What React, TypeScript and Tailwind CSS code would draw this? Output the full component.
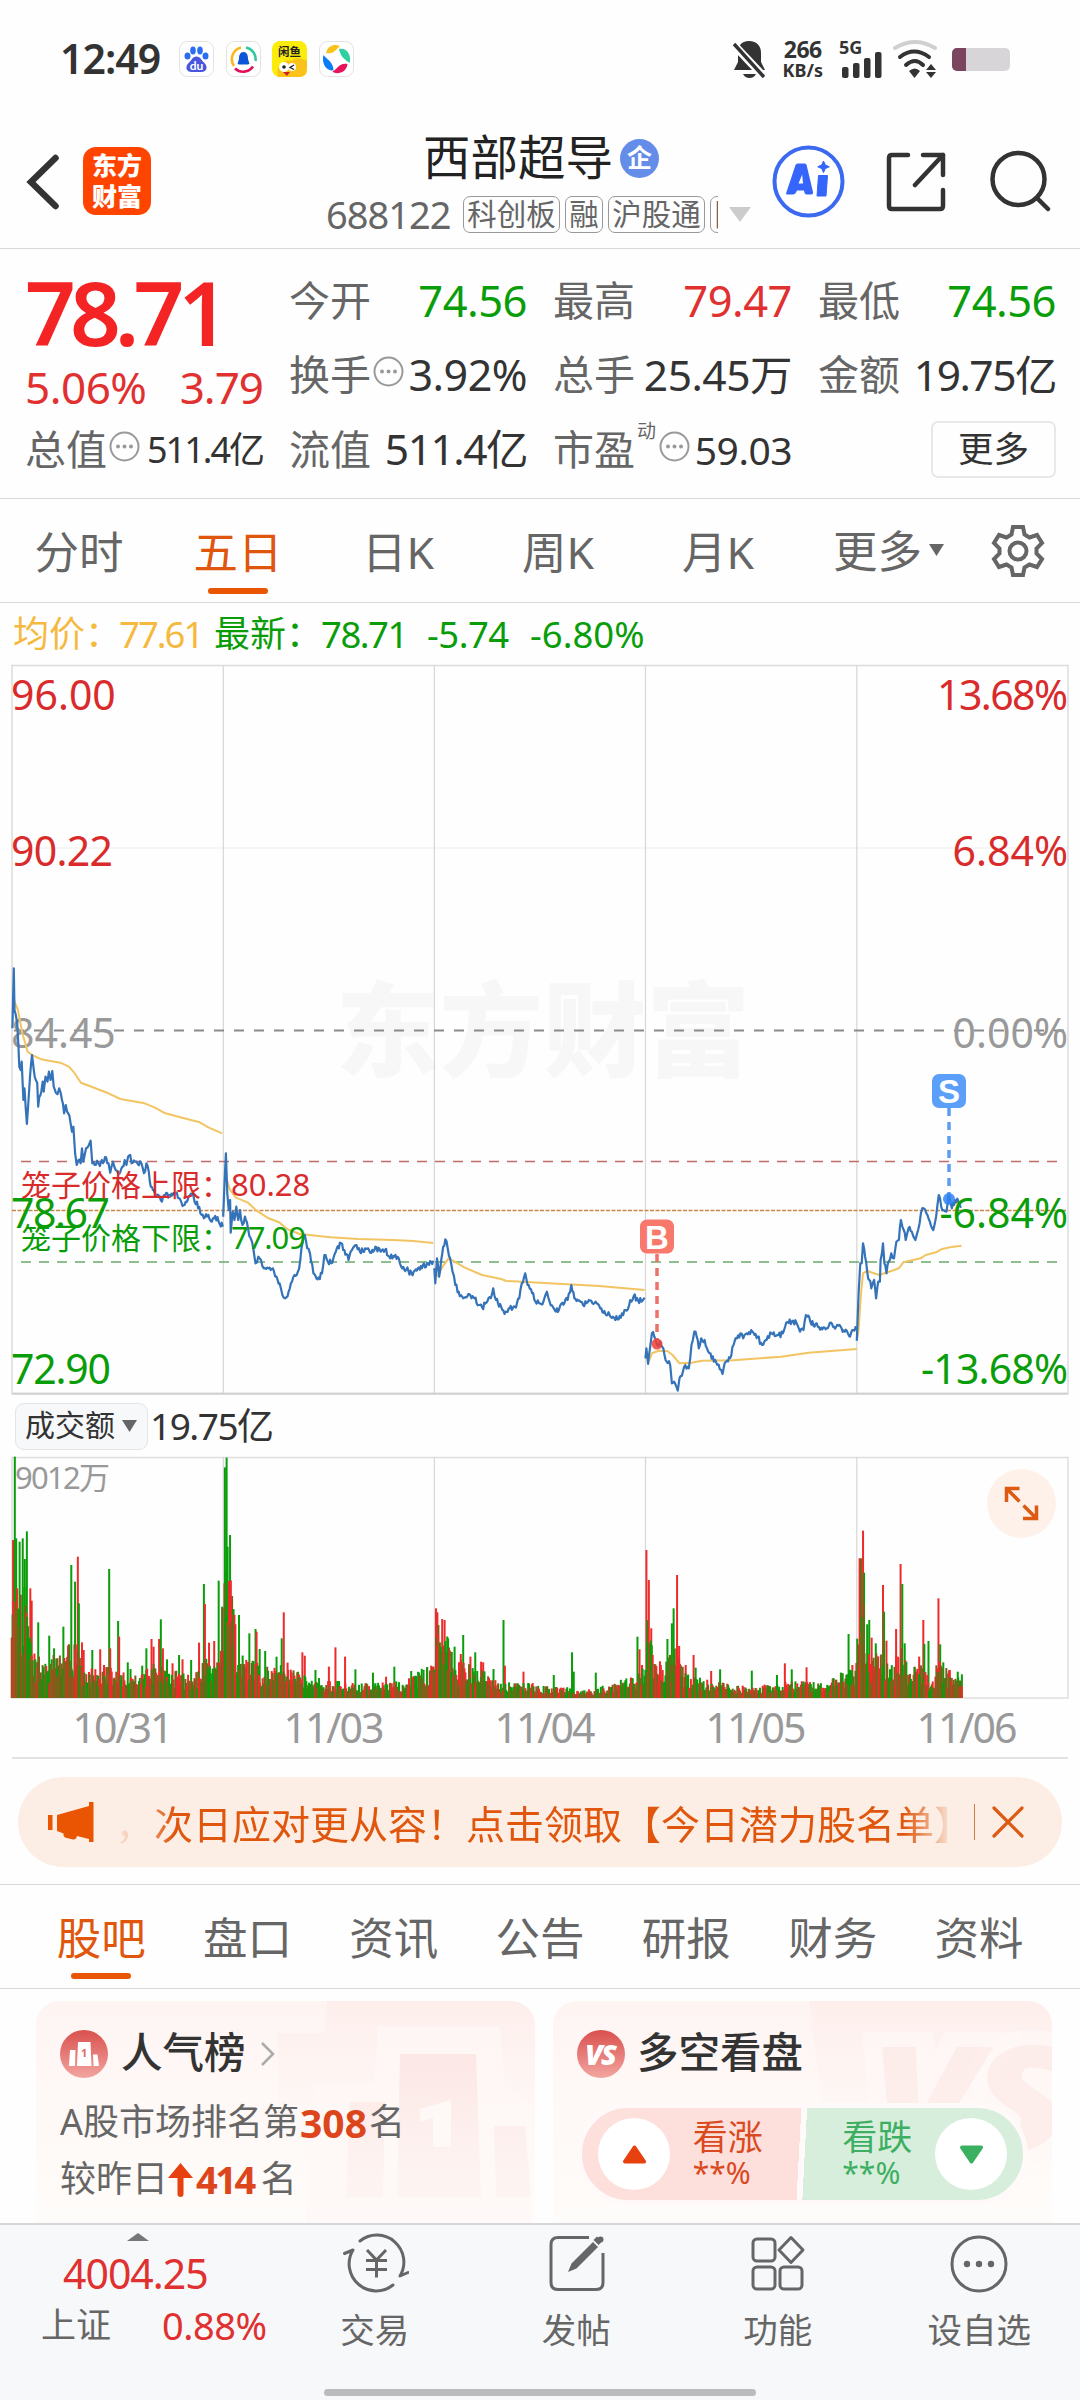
import type { ReactNode } from "react";
import clsx from "clsx";

// trims the line box so that glyphs sit in the optical middle of a row
const T = "block leading-none pb-[0.04em] whitespace-nowrap";

type Pt = [number, number];

// chart data is stored in sampling units, these map it to pixels
const SX = 0.34439;
const SY = 1 / 3;

const rand = (seed: number) => {
	let s = seed;
	return () => {
		s = (s * 1664525 + 1013904223) % 4294967296;
		return s / 4294967296;
	};
};

const parse = (s: string): Pt[] => s.trim().split(/\s+/).map((p) => p.split(",").map(Number) as Pt);

const PRICE = [
	"36,385 40,205 42,330 46,345 50,370 56,500 60,510 63,485 68,600 71,565 78,672 82,615 87,530 93,465 98,510 104,540 108,548 111,620 114,590 120,575 124,545 127,575 132,530 138,545 142,515 147,540 152,513 156,560 162,578 167,583 172,565 180,600 186,640 191,615 198,640 205,670 209,695 213,680 218,760 223,795 228,780 234,790 238,745 242,785 250,745 258,735 263,722 268,790 275,795 282,782 290,798 296,780 302,785 308,772 315,790 320,818 328,785 332,800 340,812 346,822 355,800 362,780 367,795 372,770 378,765 382,790 392,785 400,792 410,788 418,820 425,790 432,815 438,860 450,880 460,885 470,905 480,885 495,890 510,882 520,895 530,918 545,900 560,880 565,905 572,905 582,940 592,955 605,945 615,965 625,948 635,965 647,980",
	"648,950 652,850 656,760 660,880 664,930 668,900 670,998 676,935 681,960 686,920 692,960 697,930 704,975 711,950 720,985 728,1015 736,1050 742,1090 750,1070 758,1080 766,1105 780,1105 795,1112 803,1130 812,1150 820,1185 828,1195 838,1175 848,1145 855,1125 865,1115 872,1080 878,1030 885,1005 892,1045 900,1060 910,1120 922,1138 935,1120 942,1065 952,1085 965,1088 975,1055 990,1030 1000,1050 1012,1080 1022,1050 1032,1035 1045,1055 1060,1045 1075,1058 1090,1040 1105,1055 1118,1050 1130,1070 1145,1070 1158,1075 1165,1100 1180,1108 1195,1120 1210,1112 1225,1105 1240,1090 1258,1082",
	"1261,1105 1264,1150 1269,1075 1275,1130 1281,1080 1287,1040 1293,1018 1300,1045 1307,1075 1314,1115 1322,1155 1332,1175 1345,1195 1360,1182 1378,1195 1390,1215 1400,1222 1412,1208 1425,1195 1432,1165 1440,1200 1455,1220 1465,1242 1480,1225 1495,1220 1508,1195 1515,1150 1525,1120 1532,1155 1545,1180 1555,1205 1568,1210 1578,1205 1588,1175 1596,1205 1608,1225 1623,1230 1633,1208 1648,1200 1659,1155 1668,1195 1680,1202 1693,1215 1710,1200 1723,1212 1736,1212 1746,1225 1758,1242 1770,1245 1780,1250 1793,1258 1806,1240 1820,1232 1830,1200 1840,1188 1853,1202 1872,1193",
	"1874,1375 1877,1345 1882,1392 1888,1340 1893,1300 1900,1310 1908,1335 1916,1325 1926,1345 1936,1385 1946,1395 1951,1450 1960,1450 1968,1472 1973,1435 1983,1415 1990,1395 2000,1405 2008,1335 2016,1295 2023,1310 2029,1345 2036,1315 2046,1320 2053,1345 2063,1360 2073,1385 2083,1395 2090,1408 2098,1422 2108,1385 2120,1375 2130,1335 2140,1315 2150,1300 2158,1315 2168,1300 2188,1298 2200,1310 2213,1335 2226,1320 2240,1300 2253,1308 2273,1300 2283,1268 2303,1262 2313,1270 2323,1295 2333,1290 2340,1245 2353,1265 2368,1272 2388,1288 2413,1268 2428,1280 2438,1275 2453,1295 2468,1310 2478,1290 2487,1290",
	"2488,1322 2493,1180 2498,1090 2502,1090 2506,1030 2512,1070 2518,1115 2524,1140 2530,1165 2538,1140 2544,1195 2550,1145 2555,1145 2557,1080 2564,1030 2568,1090 2574,1120 2580,1085 2588,1060 2596,1075 2603,1025 2610,1020 2616,960 2624,990 2630,1020 2638,985 2648,995 2658,1020 2666,990 2674,940 2682,925 2690,940 2700,965 2710,990 2718,950 2726,885 2733,920 2740,930 2748,935 2754,880 2764,925 2773,900 2783,905 2792,920",
].map(parse);

const AVERAGE = [
	"40,300 52,330 65,400 80,455 93,465 120,478 150,484 175,488 200,500 215,517 235,548 260,558 290,570 315,580 350,597 420,610 450,623 480,640 540,656 580,667 605,682 645,700",
	"656,830 668,870 685,893 720,908 745,932 780,955 810,967 835,988 870,1002 960,1012 1040,1017 1140,1020 1200,1023 1258,1029",
	"1270,1130 1285,1100 1303,1075 1320,1085 1350,1103 1400,1125 1455,1137 1470,1143 1568,1148 1740,1158 1872,1170",
	"1884,1385 1893,1360 1913,1352 1938,1353 1953,1365 1973,1390 2008,1388 2038,1382 2128,1381 2268,1370 2348,1358 2488,1347",
	"2488,1322 2493,1290 2500,1180 2506,1120 2518,1113 2553,1125 2588,1113 2610,1105 2623,1087 2673,1075 2688,1065 2718,1057 2733,1048 2758,1042 2792,1037",
].map(parse);

const ENVELOPE = parse(
	"34,330 75,350 95,130 130,100 200,150 228,150 240,90 300,90 400,60 440,100 560,60 600,120 640,120 650,350 670,350 690,130 760,90 830,90 870,70 890,60 1060,40 1180,50 1240,90 1258,90 1264,180 1300,180 1330,110 1400,80 1430,50 1568,40 1600,35 1720,25 1800,50 1860,70 1870,110 1885,200 1900,100 1940,110 1965,150 1990,70 2060,50 2180,30 2300,50 2400,45 2440,70 2480,90 2492,250 2510,260 2530,110 2560,140 2590,90 2620,150 2640,70 2670,100 2700,60 2730,110 2750,80 2793,50"
);

const PEAKS =
	"r38,450 g43,200 g47,445 g57,455 g66,445 g72,507 g78,424 r88,595 r92,632 g111,697 g143,737 g157,775 r167,805 g184,710 g207,525 g218,575 r226,500 g229,640 r238,757 r243,780 g268,780 r291,778 r302,825 g317,537 r320,775 g343,693 r346,740 g371,817 g379,837 g413,827 g425,775 r440,747 r446,770 r462,747 g467,688 r473,775 g485,808 r501,820 g520,795 r530,808 g555,810 r578,758 g592,582 r595,642 r607,758 r622,753 g635,572 g645,650 g653,232 g658,203 g661,470 g668,435 b674,618 g682,705 g694,675 g724,730 g742,717 r745,725 g754,777 g770,783 g803,800 g818,745 r824,667 r835,818 r878,787 r885,797 g916,840 r955,830 r974,772 r1002,800 g1032,838 g1083,848 r1121,860 g1145,830 g1194,843 r1240,833 r1252,827 r1266,655 r1270,667 b1273,705 r1284,687 r1291,690 g1301,745 g1320,770 r1338,792 g1345,735 r1366,800 g1380,787 r1397,815 r1403,817 g1433,837 g1462,690 r1466,827 r1520,845 g1608,855 g1661,787 g1666,845 g1730,848 g1851,740 r1857,778 r1864,825 r1877,480 g1880,690 r1884,570 r1891,715 g1938,747 g1951,700 g1956,655 r1966,555 r1972,768 r1991,825 r2014,795 g2020,833 r2065,843 g2091,838 g2183,842 g2256,855 r2279,820 g2299,838 r2342,832 g2464,732 r2475,825 r2496,505 b2500,505 r2506,422 g2509,548 g2518,703 g2524,690 r2531,743 g2543,760 r2564,585 g2567,665 r2574,752 r2602,717 r2615,522 g2620,582 g2627,760 r2656,830 r2669,800 r2681,690 g2684,762 g2696,753 r2725,625 g2730,763 g2739,817 r2758,840 g2781,845 g2793,853";

const RED = "#ee2a2a";
const GREEN = "#0a9d0a";
const BROWN = "#79601a";

const toPath = (pts: Pt[]) => pts.map(([x, y], i) => `${i ? "L" : "M"}${(x * SX).toFixed(1)} ${(y * SY).toFixed(1)}`).join("");

const jitter = (pts: Pt[], seed: number): Pt[] => {
	const r = rand(seed);
	const out: Pt[] = [];
	pts.forEach(([x, y], i) => {
		out.push([x, y]);
		const next = pts[i + 1];
		if (!next) return;
		const n = Math.floor((next[0] - x) / 3);
		for (let k = 1; k < n; k++) {
			const t = k / n;
			out.push([x + (next[0] - x) * t, y + (next[1] - y) * t + (r() - 0.5) * 18]);
		}
	});
	return out;
};

const envelopeAt = (x: number) => {
	const i = ENVELOPE.findIndex((p) => p[0] >= x);
	if (i <= 0) return ENVELOPE[0][1];
	const [x0, y0] = ENVELOPE[i - 1];
	const [x1, y1] = ENVELOPE[i];
	return y0 + ((y1 - y0) * (x - x0)) / (x1 - x0);
};

const volumeBars = () => {
	const r = rand(77);
	const bars: { x: number; h: number; c: string }[] = [];
	for (let x = 34; x < 2793; x += 2.64) {
		const h = envelopeAt(x) * (0.35 + r() * 0.75);
		const c = r();
		bars.push({ x, h, c: c < 0.38 ? RED : c < 0.76 ? GREEN : BROWN });
	}
	return bars;
};

const peakBars = () =>
	PEAKS.split(" ").map((p) => {
		const [x, y] = p.slice(1).split(",").map(Number);
		return { x, h: 924 - y, c: p[0] === "r" ? RED : p[0] === "g" ? GREEN : BROWN };
	});

function StatusBar() {
	return (
		<div className="flex h-[118px] items-center pl-[60px] text-[#333]">
			<span className={clsx(T, "w-[119px] text-[41px] font-semibold tracking-[-1px]")}>12:49</span>
			<div className="flex gap-[11.6px]">
				<svg width="35" height="36" viewBox="0 0 35 36">
					<rect x=".5" y=".5" width="34" height="35" rx="8" fill="#fff" stroke="#e2e2e2" />
					<g fill="#2b6df0">
						<ellipse cx="8.500" cy="15" rx="3" ry="3.600" />
						<ellipse cx="14" cy="9.500" rx="2.800" ry="4" />
						<ellipse cx="21" cy="9.500" rx="2.800" ry="4" />
						<ellipse cx="26.500" cy="15" rx="3" ry="3.600" />
					</g>
					<path d="M17.500 15.500c4 0 5 4 7.500 6 5 5 2 9.500-2.500 9.500h-10c-4.500 0-7.500-4.500-2.500-9.500 2.500-2 3.500-6 7.500-6z" fill="#4a55dd" />
					<text x="17.500" y="28.500" textAnchor="middle" fontSize="12" fontWeight="700" fill="#fff" fontFamily="Lato">du</text>
				</svg>
				<svg width="35" height="36" viewBox="0 0 35 36" fill="none" strokeWidth="2.600">
					<rect x=".5" y=".5" width="34" height="35" rx="8" fill="#fff" stroke="#e2e2e2" strokeWidth="1" />
					<path d="M15 6.500A12 12 0 0 0 8 25" stroke="#f9b91c" />
					<path d="M20 6.500A12 12 0 0 1 29.500 20" stroke="#2fc9a0" />
					<path d="M9 27.500A12 12 0 0 0 27 25.500" stroke="#e0105c" />
					<path d="M17.500 11c4 0 4.500 4 4.500 7l1.500 5-2 .5h-8l-2-.5 1.500-5c0-3 .5-7 4.500-7z" fill="#0a55d8" />
				</svg>
				<svg width="35" height="36" viewBox="0 0 35 36">
					<rect width="35" height="36" rx="8" fill="#fbec0c" />
					<path d="M6 36c-3-14 8-18 14-16 3-4 9-3 15 0v8q0 8-8 8z" fill="#fbc21a" />
					<circle cx="12" cy="26" r="5" fill="#fff" />
					<circle cx="20" cy="26" r="4" fill="#fff" />
					<circle cx="12" cy="26" r="1.800" fill="#222" />
					<path d="M22 24l-4 2.500 4 2" stroke="#222" strokeWidth="1.300" fill="none" />
					<path d="M11 31h7l-3 4z" fill="#c22" />
					<text x="17.500" y="15" textAnchor="middle" fontSize="11.500" fontWeight="700" fill="#222" fontFamily="Noto Sans CJK SC">闲鱼</text>
				</svg>
				<svg width="35" height="36" viewBox="0 0 35 36">
					<rect x=".5" y=".5" width="34" height="35" rx="8" fill="#fff" stroke="#e2e2e2" />
					<path d="M7 12c2-9 11-9 14-6.500-4 2-5 8-14 6.500z" fill="#fbc21a" />
					<path d="M20 8c8-2 13 7 10.500 14-4-3-9-6-10.500-14z" fill="#2fcfa0" />
					<path d="M28.500 23c-1 9-11 11-15 7.500 5-2 6-9 15-7.500z" fill="#e8135a" />
					<path d="M14.500 29.500C6 30 2.500 21 4.500 14c3 4 10 7 10 15.500z" fill="#0a7cf5" />
				</svg>
			</div>
			<svg className="ml-[379px]" width="32" height="38" viewBox="0 0 32 38">
				<path d="M16 1c8 0 12 5 12 12v9l4 8H1l4-8v-9C5 6 8 1 16 1z" fill="#333" />
				<path d="M10 34h13q-2 4-6.500 4T10 34z" fill="#333" />
				<path d="M1 5l32 34" stroke="#fff" strokeWidth="8" />
				<path d="M1 4l30 33" stroke="#333" strokeWidth="3.500" />
			</svg>
			<div className="ml-[16px] flex w-[44px] flex-col items-center gap-px">
				<span className="block text-[23px]/[20px] font-bold tracking-[-0.5px]">266</span>
				<span className="block text-[18px]/[20px] font-bold">KB/s</span>
			</div>
			<svg className="ml-[14px]" width="44" height="38" viewBox="0 0 44 38" fill="#333">
				<text x="0" y="14" fontSize="18" fontWeight="700">5G</text>
				<rect x="3" y="27" width="6.500" height="11" rx="2" />
				<rect x="14" y="23" width="6.500" height="15" rx="2" />
				<rect x="25" y="18" width="6.500" height="20" rx="2" />
				<rect x="36" y="12" width="6.500" height="26" rx="2" />
			</svg>
			<svg className="ml-[10px]" width="44" height="38" viewBox="0 0 44 38" fill="none" strokeWidth="4" strokeLinecap="round">
				<path d="M2 8Q22-4 42 8" stroke="#d0d0d0" />
				<path d="M7 17Q21 6 36 17" stroke="#333" />
				<path d="M13 25Q22 17 30 25" stroke="#333" />
				<path d="M16 31q6-5 11 0l-5.500 7z" fill="#333" />
				<path d="M38 24l5 6h-10zM38 38l5-6h-10z" fill="#333" />
			</svg>
			<div className="ml-[15px] flex h-[23px] w-[58px] overflow-hidden rounded-[5px] bg-[#d8d5d9]">
				<div className="w-[14px] bg-[#7b4560]" />
			</div>
		</div>
	);
}

function Tag({ children }: { children: ReactNode }) {
	return (
		<span className="flex h-[37px] shrink-0 items-center rounded-[7px] border border-[#999] px-[3.5px] text-[29.5px] text-[#666]">
			<span className={T}>{children}</span>
		</span>
	);
}

function Header() {
	return (
		<div className="flex h-[131px] items-start border-b border-[#d9d9d9]">
			<svg className="mt-[36px] ml-[26px]" width="34" height="56" viewBox="0 0 34 56" fill="none" stroke="#333" strokeWidth="6.500" strokeLinecap="round">
				<path d="M29.500 4L5 28l24.500 24" />
			</svg>
			<div className="mt-[29px] ml-[23px] flex size-[68px] flex-col items-center justify-center gap-[5px] rounded-[13px] bg-[#ff4400] text-[25px] font-black text-white">
				<span className={T}>东方</span>
				<span className={T}>财富</span>
			</div>
			<div className="mt-[17px] ml-[175px] w-[425px]">
				<div className="flex h-[46px] items-center pl-[97px] text-[47.5px] text-[#222]">
					<span className={T}>西部超导</span>
					<span className="ml-[7px] flex size-[39px] items-center justify-center rounded-full bg-[#648de9] text-[25px] font-bold text-white">
						<span className={T}>企</span>
					</span>
				</div>
				<div className="mt-[15px] flex h-[37px] items-center">
					<span className={clsx(T, "w-[137px] text-[38px] tracking-[-1px] text-[#666]")}>688122</span>
					<div className="flex w-[256px] gap-[4.5px] overflow-hidden">
						<Tag>科创板</Tag>
						<Tag>融</Tag>
						<Tag>沪股通</Tag>
						<Tag>国</Tag>
					</div>
					<svg className="ml-[11px]" width="22" height="15" viewBox="0 0 22 15">
						<path d="M0 0h22L11 15z" fill="#ccc" />
					</svg>
				</div>
			</div>
			<svg className="mt-[27px] ml-[21px]" width="73" height="73" viewBox="0 0 73 73">
				<circle cx="36.500" cy="36.500" r="34" fill="#fff" stroke="#3b69f0" strokeWidth="4" />
				<path d="M14 48.500L23.500 20q.8-1.500 2.300-1.500h7q1.500 0 1.800 1.500L41 47q.3 2.500-2 2.500h-4.500q-2 0-2.500-4h-7q-1.500 4-4 4h-6q-1 0-1-1zM26.500 38.500h4.500l-.8-9z" fill="#3565fa" fillRule="evenodd" />
				<path d="M46.500 30.500h9L54 51h-9zM51.500 16l1.800 4 4 1.800-4 1.800-1.800 4-1.800-4-4-1.800 4-1.800z" fill="#3565fa" stroke="#3565fa" strokeLinejoin="round" />
			</svg>
			<svg className="mt-[34px] ml-[41px]" width="60" height="60" viewBox="0 0 60 60" fill="none" stroke="#333" strokeWidth="4.500" strokeLinecap="round" strokeLinejoin="round">
				<path d="M22 3H6q-3 0-3 3v48q0 3 3 3h48q3 0 3-3V38M37 3h20v20M57 3L29 33" />
			</svg>
			<svg className="mt-[32px] ml-[43px]" width="62" height="62" viewBox="0 0 62 62" fill="none" stroke="#333" strokeWidth="4.500" strokeLinecap="round">
				<circle cx="29.500" cy="29" r="26" />
				<path d="M48 48l11 11" />
			</svg>
		</div>
	);
}

function Dots() {
	return (
		<svg width="31" height="31" viewBox="0 0 31 31" className="mb-[8px] shrink-0">
			<circle cx="15.500" cy="15.500" r="14" fill="none" stroke="#999" strokeWidth="2" />
			<g fill="#999">
				<circle cx="9" cy="15.500" r="2" />
				<circle cx="15.500" cy="15.500" r="2" />
				<circle cx="22" cy="15.500" r="2" />
			</g>
		</svg>
	);
}

type StatProps = { label: string; value: string; tone?: string; size?: string; dots?: boolean; sup?: string };

function Stat({ label, value, tone = "text-[#333]", size = "text-[43px]", dots, sup }: StatProps) {
	return (
		<div className="flex h-[74.5px] items-center">
			<span className={clsx(T, "text-[41px] text-[#666]")}>{label}</span>
			{sup && <span className="mb-[38px] ml-[2px] block w-[22px] text-[19px] leading-none text-[#666]">{sup}</span>}
			{dots && <span className={sup ? "" : "ml-[2px]"}><Dots /></span>}
			<span className={clsx(T, "ml-auto", tone, size)}>{value}</span>
		</div>
	);
}

function Quote() {
	return (
		<div className="grid h-[250px] grid-cols-[238px_238px_239px_238px] gap-x-[26px] border-b border-[#d9d9d9] pt-[15px] pl-[25px]">
			<div>
				<div className="flex h-[98px] items-center">
					<span className={clsx(T, "text-[89px] font-semibold tracking-[-6px] text-[#f42424]")}>78.71</span>
				</div>
				<div className="flex h-[51px] items-center justify-between text-[44px] text-[#e03030]">
					<span className={clsx(T, "tracking-[-0.5px]")}>5.06%</span>
					<span className={clsx(T, "tracking-[-1px]")}>3.79</span>
				</div>
				<Stat label="总值" value="511.4亿" dots size="text-[36px] tracking-[-2px]" />
			</div>
			<div>
				<Stat label="今开" value="74.56" tone="text-[#0a9d0a]" size="text-[43.5px] tracking-[-0.5px]" />
				<Stat label="换手" value="3.92%" dots size="text-[43px] tracking-[-0.5px]" />
				<Stat label="流值" value="511.4亿" size="text-[42.5px] tracking-[-1.5px]" />
			</div>
			<div>
				<Stat label="最高" value="79.47" tone="text-[#e03030]" size="text-[43.5px] tracking-[-0.5px]" />
				<Stat label="总手" value="25.45万" size="text-[42.5px] tracking-[-0.5px]" />
				<Stat label="市盈" value="59.03" sup="动" dots size="text-[39px] tracking-[-0.5px]" />
			</div>
			<div>
				<Stat label="最低" value="74.56" tone="text-[#0a9d0a]" size="text-[43.5px] tracking-[-0.5px]" />
				<Stat label="金额" value="19.75亿" size="text-[42.5px] tracking-[-1.5px]" />
				<div className="mt-[8px] ml-auto flex h-[57px] w-[125px] items-center justify-center rounded-[7px] border-2 border-[#e8e8e8] text-[35.5px] text-[#333]">
					<span className={T}>更多</span>
				</div>
			</div>
		</div>
	);
}

const PERIODS = [
	{ label: "分时", box: "w-[158px]" },
	{ label: "五日", box: "w-[160px]", active: true },
	{ label: "日K", box: "w-[160px]" },
	{ label: "周K", box: "w-[160px]" },
	{ label: "月K", box: "w-[160px]" },
];

function Periods() {
	return (
		<div className="flex h-[104px] items-center border-b border-[#d9d9d9] text-[44.5px] text-[#666]">
			{PERIODS.map((p) => (
				<div key={p.label} className={clsx("flex h-full flex-col items-center pt-[31px]", p.box, p.active && "text-[#e0560c]")}>
					<span className={T}>{p.label}</span>
					{p.active && <span className="mt-[12px] h-[6px] w-[60px] rounded-full bg-[#ea5504]" />}
				</div>
			))}
			<div className="flex items-center pl-[35px]">
				<span className={clsx(T, "pt-[3px]")}>更多</span>
				<svg className="ml-[7px]" width="15" height="12" viewBox="0 0 15 12">
					<path d="M0 0h15L7.500 12z" fill="#666" />
				</svg>
			</div>
			<svg className="ml-[47px]" width="54" height="54" viewBox="0 0 54 54" fill="none" stroke="#666" strokeWidth="4">
				<path d="M22 3h10l1.500 7.500 5 3L46 11l5 8-5.500 5.500v5L51 35l-5 8-7.500-2.500-5 3L32 51H22l-1.500-7.500-5-3L8 43l-5-8 5.500-5.500v-5L3 19l5-8 7.500 2.500 5-3z" />
				<circle cx="27" cy="27" r="8.500" />
			</svg>
		</div>
	);
}

function Legend() {
	return (
		<div className="flex h-[61px] items-center pt-[3px] pl-[13px] text-[36.5px] text-[#0a9d0a]">
			<span className={clsx(T, "w-[106px] text-[36px] text-[#f5b93f]")}>均价：</span>
			<span className={clsx(T, "w-[95px] tracking-[-2px] text-[#f5b93f]")}>77.61</span>
			<span className={clsx(T, "w-[107px] text-[36px]")}>最新：</span>
			<span className={clsx(T, "w-[106px] tracking-[-1.5px]")}>78.71</span>
			<span className={clsx(T, "w-[103px] tracking-[-0.5px]")}>-5.74</span>
			<span className={T}>-6.80%</span>
		</div>
	);
}

const GRID_X = [223.3, 434.4, 645.5, 856.8];

function PriceChart() {
	return (
		<svg className="block" width="1080" height="731" viewBox="0 664 1080 731">
			<text x="336" y="1069" fontSize="103" fontWeight="900" fill="#f7f7f7" textLength="414" lengthAdjust="spacingAndGlyphs">东方财富</text>
			<path d="M12 848H1068" stroke="#eee" strokeWidth="1" />
			<rect x="12" y="665.500" width="1056" height="728" fill="none" stroke="#dcdcdc" strokeWidth="1.500" />
			{GRID_X.map((x) => (
				<path key={x} d={`M${x} 666V1393`} stroke="#d6d6d6" strokeWidth="1.200" />
			))}
			<path d="M12 1393.700H1068" stroke="#d0d0d0" strokeWidth="2" />
			<path d="M14 1030.500H1066" stroke="#8a8a8a" strokeWidth="2" strokeDasharray="10 10" />
			<g fontSize="41" fill="#999">
				<text x="11" y="1048">84.45</text>
				<text x="1068" y="1048" textAnchor="end">0.00%</text>
			</g>
			<g fontSize="41" fill="#d92b2b">
				<text x="11" y="710">96.00</text>
				<text x="11" y="866" textLength="102">90.22</text>
				<text x="1068" y="710" textAnchor="end" textLength="131">13.68%</text>
				<text x="1068" y="866" textAnchor="end">6.84%</text>
			</g>
			<path d="M21 1161.500H1058" stroke="#c06a6a" strokeWidth="1.600" strokeDasharray="10 8" />
			<path d="M21 1262H1058" stroke="#6aa86a" strokeWidth="1.600" strokeDasharray="10 8" />
			<path d="M12 1210.500H1066" stroke="#c9864a" strokeWidth="1.500" strokeDasharray="4 1.500" />
			<g transform="translate(0 900)" fill="none" strokeLinejoin="round">
				{AVERAGE.map((d, i) => (
					<path key={i} d={toPath(d)} stroke="#f2c462" strokeWidth="2" />
				))}
				{PRICE.map((d, i) => (
					<path key={i} d={toPath(jitter(d, i + 5))} stroke="#3573b9" strokeWidth="2.200" />
				))}
			</g>
			<g fontSize="41" fill="#0a9d0a">
				<text x="11" y="1228" textLength="99">78.67</text>
				<text x="11" y="1384" textLength="100">72.90</text>
				<text x="1068" y="1228" textAnchor="end">-6.84%</text>
				<text x="1068" y="1384" textAnchor="end" textLength="147">-13.68%</text>
			</g>
			<g fontSize="30">
				<text x="21" y="1196" fill="#d92b2b">笼子价格上限：</text>
				<text x="231" y="1196" fontSize="31" fill="#d92b2b">80.28</text>
				<text x="21" y="1248.500" fill="#0a9d0a">笼子价格下限：</text>
				<text x="231" y="1248.500" fontSize="31" textLength="75" fill="#0a9d0a">77.09</text>
			</g>
			<path d="M949 1108V1196" stroke="#5b9df5" strokeWidth="3.500" strokeDasharray="8 6" />
			<circle cx="949" cy="1199" r="6" fill="#2f82f5" fillOpacity=".85" />
			<rect x="932" y="1074" width="34" height="34" rx="7" fill="#5b9ff8" />
			<path d="M657 1254V1340" stroke="#ee7268" strokeWidth="3.500" strokeDasharray="8 6" />
			<circle cx="657" cy="1344" r="5.500" fill="#ef4035" fillOpacity=".85" />
			<rect x="640" y="1219.500" width="34" height="34" rx="7" fill="#f8786b" />
			<g fill="#fff" fontSize="33" fontWeight="700" textAnchor="middle" fontFamily="Liberation Sans">
				<text x="949" y="1103">S</text>
				<text x="657" y="1248.500">B</text>
			</g>
		</svg>
	);
}

function Turnover() {
	return (
		<div className="flex h-[61px] items-center pt-[1px] pl-[15px] text-[#333]">
			<div className="flex h-[47px] w-[133px] items-center rounded-[9px] border border-[#e3e5e8] bg-[#f7f8fa] pl-[9px] text-[30px]">
				<span className={T}>成交额</span>
				<svg className="ml-[7px]" width="15" height="12" viewBox="0 0 15 12">
					<path d="M0 0h15L7.500 12z" fill="#666" />
				</svg>
			</div>
			<span className={clsx(T, "ml-[2px] text-[37px] tracking-[-1.5px]")}>19.75亿</span>
		</div>
	);
}

const DATES = ["10/31", "11/03", "11/04", "11/05", "11/06"];

function VolumeChart() {
	return (
		<svg className="block" width="1080" height="244" viewBox="0 1456 1080 244">
			<rect x="12" y="1457.500" width="1056" height="240.500" fill="none" stroke="#dedede" strokeWidth="1.500" />
			{GRID_X.map((x) => (
				<path key={x} d={`M${x} 1457V1698`} stroke="#d6d6d6" strokeWidth="1.200" />
			))}
			<text x="15" y="1489" fontSize="31" textLength="95" fill="#999">9012万</text>
			{[...peakBars(), ...volumeBars()].map((b, i) => (
				<rect key={i} x={b.x * SX - 1} y={1698 - b.h * SY} width="2" height={b.h * SY} fill={b.c} />
			))}
			<circle cx="1021.500" cy="1503.500" r="34.500" fill="#fef1ea" />
			<path d="M1006.500 1502v-13.500h13M1007 1489l12.500 12.500M1023 1518.500h13.500v-13M1036 1518l-12.500-12.500" fill="none" stroke="#dd5a12" strokeWidth="3.500" />
		</svg>
	);
}

function Dates() {
	return (
		<div className="mx-[12px] flex h-[59px] items-center border-b-2 border-[#e2e2e2] text-[41px] text-[#999]">
			{DATES.map((d) => (
				<div key={d} className="flex w-[211px] justify-center pl-[9px]">
					<span className={clsx(T, "tracking-[-2px]")}>{d}</span>
				</div>
			))}
		</div>
	);
}

function Banner() {
	return (
		<div className="mx-[18px] mt-[18px] flex h-[90px] items-center rounded-full bg-[#fceee5] pl-[30px] text-[#e0560c]">
			<svg width="46" height="40" viewBox="0 0 46 40" fill="#ea5504">
				<path d="M0 13h4.500v15H0zM9 13l32-9V0h4.500v40H41v-3l-12-3q-1 4-4 3.500l-8-2q-2-1-1.500-4L9 29z" />
			</svg>
			<div className="ml-[21px] w-[839px] overflow-hidden [mask-image:linear-gradient(to_right,transparent,black_7%,black_94%,transparent)]">
				<span className={clsx(T, "py-[0.12em] text-[39px]")}>，次日应对更从容！点击领取【今日潜力股名单】</span>
			</div>
			<div className="ml-[20px] h-[36px] w-px bg-[#d77a40]" />
			<svg className="ml-[17px]" width="32" height="32" viewBox="0 0 32 32" stroke="#dd5a12" strokeWidth="3.200" strokeLinecap="round">
				<path d="M2 2l28 28M30 2L2 30" />
			</svg>
		</div>
	);
}

const SECTIONS = ["股吧", "盘口", "资讯", "公告", "研报", "财务", "资料"];

function Sections() {
	return (
		<div className="mt-[17px] flex h-[105px] border-y border-[#d9d9d9] pl-[28px] text-[44.5px] text-[#666]">
			{SECTIONS.map((s, i) => (
				<div key={s} className={clsx("flex w-[146.3px] flex-col items-center pt-[31px]", i === 0 && "text-[#e0560c]")}>
					<span className={T}>{s}</span>
					{i === 0 && <span className="mt-[11px] h-[6px] w-[60px] rounded-full bg-[#ea5504]" />}
				</div>
			))}
		</div>
	);
}

function PopularityCard() {
	return (
		<div className="relative h-[222px] w-[499px] overflow-hidden rounded-t-[24px] bg-linear-to-b from-[#fef5f3] to-[#fefcfa]">
			<svg className="absolute inset-0" width="499" height="222" viewBox="0 0 499 222">
				<defs>
					<linearGradient id="pop" x1="0" y1="0" x2="0" y2="1">
						<stop offset="0" stopColor="#fbe3e1" stopOpacity=".8" />
						<stop offset="1" stopColor="#fdf0ed" stopOpacity=".5" />
					</linearGradient>
					<linearGradient id="popBack" x1="0" y1="0" x2="0" y2="1">
						<stop offset="0" stopColor="#fdeae7" stopOpacity=".6" />
						<stop offset=".8" stopColor="#fef8f6" stopOpacity="0" />
					</linearGradient>
				</defs>
				<path d="M291 0h208v222H242V32h47z" fill="url(#popBack)" />
				<path d="M342 25h122l5 60 26 20v117H270l8-140h60z" fill="#fef8f6" fillOpacity=".7" />
				<path d="M364 53h76l5 143h-84zM314 101h35l-2 95h-37zM458 125h31l6 71h-35z" fill="url(#pop)" />
				<path d="M384 108l31-9v47h-18v-29l-13 4z" fill="#fef8f6" />
			</svg>
			<div className="relative flex h-[106px] items-center pl-[24px]">
				<svg width="48" height="48" viewBox="0 0 48 48">
					<defs>
						<linearGradient id="rk" x1="0" y1="0" x2="0" y2="1">
							<stop offset="0" stopColor="#d9504e" />
							<stop offset="1" stopColor="#f2a5a0" />
						</linearGradient>
					</defs>
					<circle cx="24" cy="24" r="24" fill="url(#rk)" />
					<path d="M18 12h12.500l1 24H17zM10 20h5.500L15 36H9zM33 24.500h4.500L39 36h-5.500z" fill="#fff" />
					<text x="21" y="27" fontSize="11" fontWeight="700" fill="#e06a68">1</text>
				</svg>
				<span className={clsx(T, "ml-[13px] text-[41.5px] font-medium text-[#333]")}>人气榜</span>
				<svg className="ml-[15px]" width="14" height="24" viewBox="0 0 14 24" fill="none" stroke="#aaa" strokeWidth="2.500">
					<path d="M1 1l11 11L1 23" />
				</svg>
			</div>
			<div className="relative flex h-[32px] items-center pl-[24px] text-[36px] text-[#666]">
				<span className={T}>A股市场排名第</span>
				<span className={clsx(T, "ml-px text-[39px] font-bold text-[#dd461c]")}>308</span>
				<span className={clsx(T, "ml-[2px]")}>名</span>
			</div>
			<div className="relative mt-[25px] flex h-[32px] items-center pl-[24px] text-[36px] text-[#666]">
				<span className={T}>较昨日</span>
				<svg width="25" height="34" viewBox="0 0 25 34" fill="#e6410f">
					<path d="M12.500 0L25 15h-9.500v16q0 3-3 3t-3-3V15H0z" />
				</svg>
				<span className={clsx(T, "ml-[3px] text-[38px] font-bold tracking-[-2.5px] text-[#dd461c]")}>414</span>
				<span className={clsx(T, "ml-[7px]")}>名</span>
			</div>
		</div>
	);
}

function VoteCard() {
	return (
		<div className="relative h-[222px] w-[499px] overflow-hidden rounded-t-[24px] bg-linear-to-b from-[#fef5f3] to-[#fefcfa]">
			<svg className="absolute inset-0" width="499" height="222" viewBox="0 0 499 222">
				<path d="M256 0h243v222H285z" fill="url(#popBack)" />
				<text x="316" y="150" fontSize="146" fontWeight="800" fontStyle="italic" fill="#fce3e0" fillOpacity=".5" stroke="#fef8f6" strokeOpacity=".7" strokeWidth="30" paintOrder="stroke" letterSpacing="-8" textLength="190" lengthAdjust="spacingAndGlyphs" fontFamily="Open Sans">VS</text>
			</svg>
			<div className="relative flex h-[106px] items-center pl-[24px]">
				<svg width="48" height="48" viewBox="0 0 48 48">
					<circle cx="24" cy="24" r="24" fill="url(#rk)" />
					<text x="23" y="35" textAnchor="middle" fontSize="29" fontWeight="800" fontStyle="italic" letterSpacing="-2" fill="#fff" fontFamily="Open Sans">VS</text>
				</svg>
				<span className={clsx(T, "ml-[12px] text-[41.5px] font-medium text-[#333]")}>多空看盘</span>
			</div>
			<div className="relative -mt-[4px] ml-[24px] flex h-[102px] w-[451px] items-center justify-between rounded-full border-[5px] border-[#fffaf9] bg-linear-[93deg,#fddfdc_49.200%,#fffaf9_49.200%,#fffaf9_50.500%,#d7eedd_50.500%] px-[16px]">
				<div className="flex size-[72px] items-center justify-center rounded-full bg-white">
					<svg width="23" height="19" viewBox="0 0 23 19" fill="#e6410f" stroke="#e6410f" strokeWidth="4" strokeLinejoin="round">
						<path d="M11.500 2.500L21 16.500H2z" />
					</svg>
				</div>
				<div className="mr-[57px] flex flex-col gap-[3px] text-[#d94a1e]">
					<span className={clsx(T, "text-[35px]")}>看涨</span>
					<span className={clsx(T, "text-[30px]")}>**%</span>
				</div>
				<div className="flex flex-col gap-[3px] text-[#3eaf62]">
					<span className={clsx(T, "text-[35px]")}>看跌</span>
					<span className={clsx(T, "text-[30px]")}>**%</span>
				</div>
				<div className="flex size-[72px] items-center justify-center rounded-full bg-white">
					<svg width="23" height="19" viewBox="0 0 23 19" fill="#3bb060" stroke="#3bb060" strokeWidth="4" strokeLinejoin="round">
						<path d="M11.500 16.500L21 2.500H2z" />
					</svg>
				</div>
			</div>
		</div>
	);
}

function NavItem({ label, children }: { label: string; children: ReactNode }) {
	return (
		<div className="flex w-[201.500px] flex-col items-center pt-[8px] text-[34.5px] text-[#666]">
			<svg width="68" height="60" viewBox="0 0 68 60" fill="none" stroke="#666" strokeWidth="3">
				{children}
			</svg>
			<span className={clsx(T, "mt-[20px]")}>{label}</span>
		</div>
	);
}

function BottomBar() {
	return (
		<div className="flex h-[177px] flex-col border-t-2 border-[#d5d7da] bg-[#f7f8fa]">
			<div className="flex h-[164px]">
				<div className="flex w-[274px] flex-col">
					<svg className="mt-[8px] ml-[127px]" width="22" height="8" viewBox="0 0 22 8">
						<path d="M11 0l11 8H0z" fill="#777" />
					</svg>
					<span className={clsx(T, "mt-[12px] ml-[63px] text-[41px] tracking-[-1px] text-[#e03030]")}>4004.25</span>
					<div className="mt-[10px] flex items-center text-[38px]">
						<span className={clsx(T, "ml-[41px] w-[121px] text-[35px] text-[#666]")}>上证</span>
						<span className={clsx(T, "tracking-[-0.5px] text-[#e03030]")}>0.88%</span>
					</div>
				</div>
				<NavItem label="交易">
					<path d="M19 8A27 27 0 0 1 59 43l8-3.500" strokeLinecap="round" strokeLinejoin="round" />
					<path d="M52 52A27 27 0 0 1 12 17l-8.500 3.500" strokeLinecap="round" strokeLinejoin="round" />
					<path d="M26 17l9.500 10L45 17M35.500 27v17.500M25 27.500h21M25 36.500h21" />
				</NavItem>
				<NavItem label="发帖">
					<path d="M47 4.500H16q-7 0-7 7v38q0 7 7 7h38q7 0 7-7V20" />
					<path d="M26 39l3.500-8.500L51 9l5 5-21.500 21.500z" fill="#666" stroke="none" />
					<path d="M54 9.500l3.500-3.500" strokeWidth="7" />
					<circle cx="58.500" cy="6.500" r="3" fill="#666" stroke="none" />
				</NavItem>
				<NavItem label="功能">
					<rect x="9" y="6" width="22" height="22" rx="4" />
					<path d="M47 4.500l12 12.500-12 12.500L35 17z" strokeLinejoin="round" />
					<rect x="9" y="34" width="22" height="22" rx="4" />
					<rect x="36" y="34" width="22" height="22" rx="4" />
				</NavItem>
				<NavItem label="设自选">
					<circle cx="34" cy="31" r="27" />
					<g fill="#666" stroke="none">
						<circle cx="22" cy="31" r="3.200" />
						<circle cx="34" cy="31" r="3.200" />
						<circle cx="46" cy="31" r="3.200" />
					</g>
				</NavItem>
			</div>
			<div className="mx-auto h-[7px] w-[432px] rounded-full bg-[#babbbd]" />
		</div>
	);
}

export default function App() {
	return (
		<div className="h-[2400px] w-[1080px] overflow-hidden bg-[#fefefe] font-['Noto_Sans','Noto_Sans_CJK_SC',sans-serif]">
			<StatusBar />
			<Header />
			<Quote />
			<Periods />
			<Legend />
			<PriceChart />
			<Turnover />
			<VolumeChart />
			<Dates />
			<Banner />
			<Sections />
			<div className="flex gap-[18px] pt-[12px] pl-[36px]">
				<PopularityCard />
				<VoteCard />
			</div>
			<BottomBar />
		</div>
	);
}
